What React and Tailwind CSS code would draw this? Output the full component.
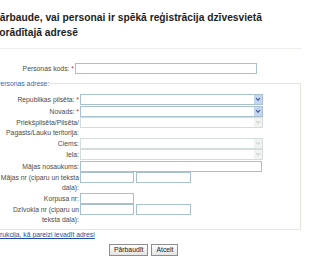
const Arrow = ({ disabled }) => (
  <div
    className={`w-[8px] h-full flex items-center justify-center ${
      disabled ? 'bg-[#f1f3f1]' : 'bg-[#c3d5f3]'
    }`}
  >
    <svg width="6" height="5" viewBox="0 0 6 5">
      <path
        d="M1 1.2 L3 3.2 L5 1.2"
        fill="none"
        stroke={disabled ? '#cfd4cf' : '#3f5a8c'}
        strokeWidth="1.2"
      />
    </svg>
  </div>
);

const Select = ({ disabled }) => (
  <div
    className={`w-[183px] h-[11px] border flex justify-end bg-white ${
      disabled ? 'border-[#d5dcdc]' : 'border-[#a9c1cf]'
    }`}
  >
    <Arrow disabled={disabled} />
  </div>
);

const Input = ({ w }) => (
  <div className={`h-[11px] border border-[#a9c1cf] bg-white ${w}`} />
);

const Row = ({ label, req, children }) => (
  <div className="flex items-start gap-[1px]">
    <div className="w-[80px] shrink-0 text-right leading-[9.5px] pt-[1px]">
      {label}
      {req && <span className="text-[#d2232a]"> *</span>}
    </div>
    <div className="flex gap-[2px]">{children}</div>
  </div>
);

export default function App() {
  return (
    <div className="w-[320px] h-[261px] overflow-hidden bg-white text-[#4a4a4a] font-['Liberation_Sans',Arial,sans-serif] text-[6.8px]">
      <div className="ml-[-14px] w-[315px]">
        {/* Title */}
        <h1 className="pl-[7px] pt-[10px] pr-[20px] text-[10.25px] leading-[15px] font-bold text-[#1e1e1e]">
          Pārbaude, vai personai ir spēkā reģistrācija dzīvesvietā norādītajā adresē
        </h1>
        <div className="mt-[8px] border-t border-[#eeeeea]" />

        {/* Personas kods */}
        <div className="mt-[14px] flex items-start gap-[1px]">
          <div className="w-[88px] shrink-0 text-right pt-[1px] leading-[9.5px]">
            Personas kods:<span className="text-[#d2232a]"> *</span>
          </div>
          <Input w="w-[182px]" />
        </div>

        {/* Address fieldset */}
        <fieldset className="mt-[5px] border border-[#e6e6dc] pl-[12px] pt-[6px] pb-[5px]">
          <legend className="ml-[-3px] leading-[9px] text-[#2e6bb5]">Personas adrese:</legend>
          <div className="flex flex-col gap-y-[0.5px]">
            <Row label="Republikas pilsēta:" req>
              <Select />
            </Row>
            <Row label="Novads:" req>
              <Select />
            </Row>
            <Row label="Priekšpilsēta/Pilsēta/ Pagasts/Lauku teritorija:">
              <Select disabled />
            </Row>
            <Row label="Ciems:">
              <Select disabled />
            </Row>
            <Row label="Iela:">
              <Select disabled />
            </Row>
            <Row label="Mājas nosaukums:">
              <Input w="w-[182px]" />
            </Row>
            <Row label="Mājas nr (ciparu un teksta daļa):">
              <Input w="w-[54px]" />
              <Input w="w-[55px]" />
            </Row>
            <Row label="Korpusa nr:">
              <Input w="w-[54px]" />
            </Row>
            <Row label="Dzīvokļa nr (ciparu un teksta daļa):">
              <Input w="w-[54px]" />
              <Input w="w-[55px]" />
            </Row>
          </div>
        </fieldset>

        {/* Help link */}
        <div className="pl-[3px] leading-[10px]">
          <a href="#" className="text-[#1d4f9c] underline">
            Instrukcija, kā pareizi ievadīt adresi
          </a>
        </div>

        {/* Buttons */}
        <div className="mt-[4px] pl-[123px] flex gap-[3px]">
          <button className="h-[12px] px-[4px] border border-[#8e8e8e] bg-gradient-to-b from-white to-[#e4e4e4] text-[#222] leading-none">
            Pārbaudīt
          </button>
          <button className="h-[12px] px-[4px] border border-[#8e8e8e] bg-gradient-to-b from-white to-[#e4e4e4] text-[#222] leading-none">
            Atcelt
          </button>
        </div>
      </div>
    </div>
  );
}
